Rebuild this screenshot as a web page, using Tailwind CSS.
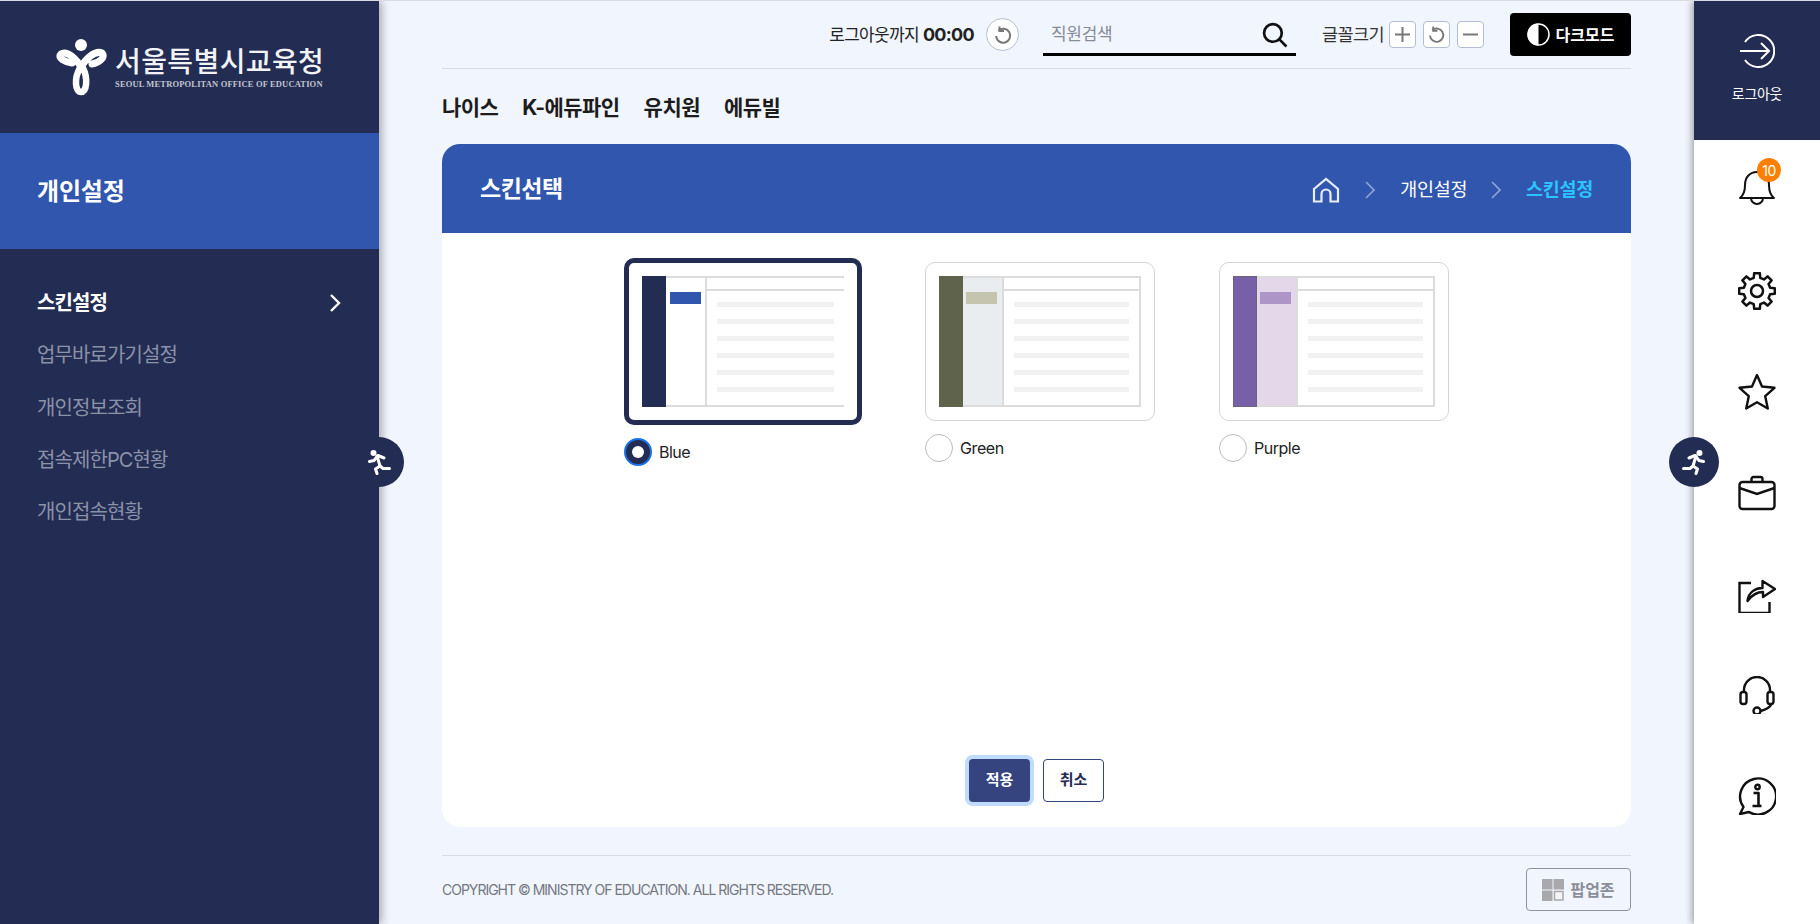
<!DOCTYPE html>
<html lang="ko">
<head>
    <meta charset="UTF-8">
    <title>스킨설정</title>
    <script src="https://cdn.jsdelivr.net/npm/@tailwindcss/browser@4"></script>
</head>
<body class="bg-[#f1f5fd] font-['Inter','Noto_Sans_CJK_KR',sans-serif] text-[#222]">
<div class="relative flex h-[924px] w-[1820px] overflow-hidden border-t border-[#d9dbe0]">

    <!-- left menu -->
    <aside class="z-10 flex w-[379px] flex-none flex-col bg-[#232d53] shadow-[3px_0_8px_rgba(0,0,0,0.3)]">
        <div class="flex h-[132px] flex-none items-start pl-[56px] pt-[37px]">
            <svg width="52" height="58" viewBox="0 0 52 58" fill="none" stroke="#fff" stroke-linecap="round">
                <circle cx="25" cy="7" r="6" fill="#fff" stroke="none"/>
                <path d="M26 31 C21 21 11 12 5 16 C1 20 9 24 16 25" stroke-width="7"/>
                <path d="M24 31 C29 21 39 12 46 15 C50 19 43 25 36 26" stroke-width="7"/>
                <path d="M24 30 C18 40 19 54 25 54 C31 54 32 40 27 30" stroke-width="6.500"/>
            </svg>
            <div class="ml-[7px] mt-[7px] flex flex-col">
                <span class="whitespace-nowrap text-[28px] font-medium leading-[34px] tracking-[0.4px] text-[#f2f3f6]">서울특별시교육청</span>
                <span class="whitespace-nowrap font-['Liberation_Serif',serif] text-[8.5px] font-bold leading-[10px] tracking-[0.15px] text-[#c2c5d0]">SEOUL METROPOLITAN OFFICE OF EDUCATION</span>
            </div>
        </div>
        <div class="flex h-[116px] flex-none items-center bg-[#3156ae] pl-[37px] pt-[2px] text-[24px] font-bold tracking-[-0.2px] text-white">개인설정</div>
        <nav class="flex flex-col pt-[28px] text-[20px] tracking-[-0.9px] text-[#8b91a8]">
            <a class="flex h-[52px] items-center justify-between pl-[37px] pr-[38px] font-bold text-white">
                스킨설정
                <svg width="12" height="20" viewBox="0 0 12 20" fill="none" stroke="#fff" stroke-width="2.4"><path d="M2 2l8 8-8 8"/></svg>
            </a>
            <a class="flex h-[52px] items-center pl-[37px]">업무바로가기설정</a>
            <a class="flex h-[53px] items-center pl-[37px]">개인정보조회</a>
            <a class="flex h-[52px] items-center pl-[37px]">접속제한PC현황</a>
            <a class="flex h-[52px] items-center pl-[37px]">개인접속현황</a>
        </nav>
    </aside>

    <!-- main -->
    <main class="flex min-w-0 flex-1 flex-col px-[63px]">
        <header class="flex h-[68px] flex-none items-center justify-end border-b border-[#d8dce6]">
            <span class="whitespace-nowrap pt-[1px] text-[17px] tracking-[-0.7px] text-[#222]">로그아웃까지 <b class="text-[18px] font-bold">00:00</b></span>
            <button class="ml-[12px] flex h-[33px] w-[33px] items-center justify-center rounded-full border border-[#b5bdd3] bg-white">
                <svg width="20" height="20" viewBox="0 0 20 20" fill="none" stroke="#777" stroke-width="2"><path d="M5.5 5.5A7 7 0 1 1 3.2 11"/><path d="M6.5 1.5v4.5h4.5" stroke-linejoin="miter"/></svg>
            </button>
            <div class="ml-[24px] mt-[15px] flex h-[40px] w-[253px] items-center justify-between self-start border-b-[3px] border-black pl-[8px] pr-[8px]">
                <input class="w-[150px] bg-transparent text-[17px] tracking-[-0.3px] outline-none placeholder:text-[#858b97]" placeholder="직원검색">
                <svg width="26" height="26" viewBox="0 0 25 25" fill="none" stroke="#111" stroke-width="2.6"><circle cx="10.5" cy="10.5" r="8.5"/><path d="M16.5 16.5l7 7"/></svg>
            </div>
            <span class="ml-[26px] whitespace-nowrap pt-[1px] text-[17.5px] tracking-[-0.6px] text-[#333]">글꼴크기</span>
            <div class="ml-[5px] flex gap-[7px]">
                <button class="flex h-[27px] w-[27px] items-center justify-center rounded-[4px] border border-[#b5bdd3] bg-white">
                    <svg width="17" height="17" viewBox="0 0 17 17" stroke="#777" stroke-width="2"><path d="M8.5 1v15M1 8.5h15"/></svg>
                </button>
                <button class="flex h-[27px] w-[27px] items-center justify-center rounded-[4px] border border-[#b5bdd3] bg-white">
                    <svg width="19" height="19" viewBox="0 0 20 20" fill="none" stroke="#777" stroke-width="2"><path d="M5.5 5.5A7 7 0 1 1 3.2 11"/><path d="M6.5 1.5v4.5h4.5"/></svg>
                </button>
                <button class="flex h-[27px] w-[27px] items-center justify-center rounded-[4px] border border-[#b5bdd3] bg-white">
                    <svg width="17" height="17" viewBox="0 0 17 17" stroke="#777" stroke-width="2"><path d="M1 8.5h15"/></svg>
                </button>
            </div>
            <button class="ml-[26px] flex h-[43px] w-[121px] items-center justify-center gap-[6px] rounded-[4px] bg-black text-[16px] font-bold text-white">
                <svg width="23" height="23" viewBox="0 0 23 23"><circle cx="11.5" cy="11.5" r="10.5" fill="none" stroke="#fff" stroke-width="1.5"/><path d="M11.5 0.5a11 11 0 0 0 0 22z" fill="#fff"/></svg>
                다크모드
            </button>
        </header>

        <nav class="flex h-[75px] flex-none items-center gap-[24px] pt-[3px] text-[21px] font-bold tracking-[-0.55px] text-[#1c1c1c]">
            <a>나이스</a><a>K-에듀파인</a><a>유치원</a><a>에듀빌</a>
        </nav>

        <section class="flex h-[683px] flex-none flex-col overflow-hidden rounded-[18px] bg-white">
            <div class="flex h-[89px] flex-none items-center justify-between bg-[#3156ae] pl-[38px] pr-[38px] pt-[2px] text-white">
                <h2 class="text-[23px] font-bold tracking-[-0.5px]">스킨선택</h2>
                <div class="flex items-center text-[18.5px] tracking-[-0.3px]">
                    <svg width="28" height="26" viewBox="0 0 28 26" fill="none" stroke="#e8edf8" stroke-width="2.2"><path d="M2 12L14 2l12 10v12.5H18.5V17a4.5 4.5 0 0 0-9 0v7.500H2z"/></svg>
                    <svg class="ml-[25px]" width="10" height="18" viewBox="0 0 10 18" fill="none" stroke="#8fa5d8" stroke-width="1.6"><path d="M1 1l8 8-8 8"/></svg>
                    <span class="ml-[25px]">개인설정</span>
                    <svg class="ml-[24px]" width="10" height="18" viewBox="0 0 10 18" fill="none" stroke="#8fa5d8" stroke-width="1.6"><path d="M1 1l8 8-8 8"/></svg>
                    <span class="ml-[25px] font-bold text-[#2cc4ff]">스킨설정</span>
                </div>
            </div>

            <div class="flex flex-1 flex-col">
                <div class="flex flex-1 items-start justify-center gap-[63px] pt-[25px]">
                    <!-- blue -->
                    <div class="flex w-[238px] flex-col">
                        <div class="rounded-[10px] border-[5px] border-[#232d53] p-[13px]">
                            <div class="flex h-[131px] w-[202px] border-b-2 border-[#dcdcdc]">
                                <div class="-mb-[2px] w-[24px] bg-[#232d53]"></div>
                                <div class="w-[41px] border-r-2 border-t-2 border-[#dcdcdc] pl-[4px] pt-[14px]"><div class="h-[12px] w-[31px] bg-[#3156ae]"></div></div>
                                <div class="flex-1 border-t-2 border-[#dcdcdc]">
                                    <div class="h-[13px] border-b-2 border-[#dcdcdc]"></div>
                                    <div class="flex flex-col gap-[12px] px-[10px] pt-[11px]">
                                        <div class="h-[5px] bg-[#f1f1f1]"></div><div class="h-[5px] bg-[#f1f1f1]"></div><div class="h-[5px] bg-[#f1f1f1]"></div><div class="h-[5px] bg-[#f1f1f1]"></div><div class="h-[5px] bg-[#f1f1f1]"></div><div class="h-[5px] bg-[#f1f1f1]"></div>
                                    </div>
                                </div>
                            </div>
                        </div>
                        <label class="mt-[13px] flex items-center gap-[7px] text-[16px] tracking-[-0.5px]">
                            <span class="flex h-[28px] w-[28px] items-center justify-center rounded-full border-[2px] border-[#1a73e8] bg-[#232d53]"><span class="h-[12px] w-[12px] rounded-full bg-white"></span></span>
                            Blue
                        </label>
                    </div>
                    <!-- green -->
                    <div class="mt-[4px] flex w-[230px] flex-col">
                        <div class="rounded-[10px] border border-[#d5d5d5] p-[13px]">
                            <div class="flex h-[131px] w-[202px] border-b-2 border-[#dcdcdc]">
                                <div class="-mb-[2px] w-[24px] bg-[#5f634c]"></div>
                                <div class="w-[41px] border-r-2 border-t-2 border-[#dcdcdc] bg-[#e9edf0] pl-[3px] pt-[14px]"><div class="h-[12px] w-[31px] bg-[#c5c4ae]"></div></div>
                                <div class="flex-1 border-r-2 border-t-2 border-[#dcdcdc]">
                                    <div class="h-[13px] border-b-2 border-[#dcdcdc]"></div>
                                    <div class="flex flex-col gap-[12px] px-[10px] pt-[11px]">
                                        <div class="h-[5px] bg-[#f1f1f1]"></div><div class="h-[5px] bg-[#f1f1f1]"></div><div class="h-[5px] bg-[#f1f1f1]"></div><div class="h-[5px] bg-[#f1f1f1]"></div><div class="h-[5px] bg-[#f1f1f1]"></div><div class="h-[5px] bg-[#f1f1f1]"></div>
                                    </div>
                                </div>
                            </div>
                        </div>
                        <label class="mt-[13px] flex items-center gap-[7px] text-[16px] tracking-[-0.4px]">
                            <span class="h-[28px] w-[28px] rounded-full border border-[#bbb] bg-white"></span>
                            Green
                        </label>
                    </div>
                    <!-- purple -->
                    <div class="ml-[1px] mt-[4px] flex w-[230px] flex-col">
                        <div class="rounded-[10px] border border-[#d5d5d5] p-[13px]">
                            <div class="flex h-[131px] w-[202px] border-b-2 border-[#dcdcdc]">
                                <div class="-mb-[2px] w-[24px] border border-[#6b6478] bg-[#7860a8]"></div>
                                <div class="w-[41px] border-r-2 border-t-2 border-[#dcdcdc] bg-[#e3d7e9] pl-[3px] pt-[14px]"><div class="h-[12px] w-[31px] bg-[#ae95c8]"></div></div>
                                <div class="flex-1 border-r-2 border-t-2 border-[#dcdcdc]">
                                    <div class="h-[13px] border-b-2 border-[#dcdcdc]"></div>
                                    <div class="flex flex-col gap-[12px] px-[10px] pt-[11px]">
                                        <div class="h-[5px] bg-[#f1f1f1]"></div><div class="h-[5px] bg-[#f1f1f1]"></div><div class="h-[5px] bg-[#f1f1f1]"></div><div class="h-[5px] bg-[#f1f1f1]"></div><div class="h-[5px] bg-[#f1f1f1]"></div><div class="h-[5px] bg-[#f1f1f1]"></div>
                                    </div>
                                </div>
                            </div>
                        </div>
                        <label class="mt-[13px] flex items-center gap-[7px] text-[16px] tracking-[-0.5px]">
                            <span class="h-[28px] w-[28px] rounded-full border border-[#bbb] bg-white"></span>
                            Purple
                        </label>
                    </div>
                </div>
                <div class="flex justify-center gap-[13px] pb-[25px] text-[15px] font-bold">
                    <button class="h-[43px] w-[61px] rounded-[4px] bg-[#35447f] text-white ring-[4px] ring-[#bfdbfe]">적용</button>
                    <button class="h-[43px] w-[61px] rounded-[4px] border border-[#35447f] bg-white text-[#232d53]">취소</button>
                </div>
            </div>
        </section>

        <footer class="mt-[28px] flex flex-1 items-center justify-between border-t border-[#d8dce6] pb-[1px]">
            <span class="text-[14px] tracking-[-1px] text-[#747883]">COPYRIGHT © MINISTRY OF EDUCATION. ALL RIGHTS RESERVED.</span>
            <button class="flex h-[43px] w-[105px] items-center justify-center gap-[6px] rounded-[4px] border border-[#8f939e] text-[16px] font-bold text-[#8a8e99]">
                <svg width="22" height="22" viewBox="0 0 22 22"><path d="M0 0h10.500v10.500H0zM11.500 0H22v10.500H11.500zM0 11.500h10.500V22H0z" fill="#a8a8ad"/><path d="M12.500 12.500h8.500v8.500h-8.500z" fill="#f4f4f6" stroke="#a8a8ad" stroke-width="1.500"/></svg>
                팝업존
            </button>
        </footer>
    </main>

    <!-- right quick menu -->
    <aside class="z-10 flex w-[126px] flex-none flex-col bg-white shadow-[-2px_0_7px_rgba(0,0,0,0.35)]">
        <a class="flex h-[139px] flex-none flex-col items-center bg-[#232d53] pt-[33px] text-[14px] tracking-[-0.3px] text-white">
            <svg width="36" height="34" viewBox="0 0 36 34" fill="none" stroke="#fff" stroke-width="2"><path d="M6 8a16 16 0 1 1 0 18"/><path d="M1 17h29M22 9l8 8-8 8"/></svg>
            <span class="mt-[15px]">로그아웃</span>
        </a>
        <div class="flex flex-col items-center gap-[63px] pt-[27px]">
            <!-- bell -->
            <div class="relative h-[38px] w-[38px]">
                <svg width="38" height="38" viewBox="0 0 38 38" fill="none" stroke="#111" stroke-width="2"><path d="M2 31c4-3 5-7 5-13 0-8 5-13 12-13s12 5 12 13c0 6 1 10 5 13z" stroke-linejoin="round"/><path d="M13 31a6 6 0 0 0 12 0"/></svg>
                <span class="absolute -right-[5px] -top-[9px] flex h-[24px] w-[24px] items-center justify-center rounded-full bg-[#ff7f00] text-[14px] tracking-[-0.5px] text-white">10</span>
            </div>
            <svg class="mt-[4px]" width="38" height="38" viewBox="0 0 38 38" fill="none" stroke="#111" stroke-width="2.500" stroke-linejoin="round">
                <g transform="translate(19 19)">
                    <polygon points="-3.27,-13.1 -2.8,-17.8 2.8,-17.8 3.27,-13.1 6.95,-11.57 10.6,-14.57 14.57,-10.6 11.57,-6.95 13.1,-3.27 17.8,-2.8 17.8,2.8 13.1,3.27 11.57,6.95 14.57,10.6 10.6,14.57 6.95,11.57 3.27,13.1 2.8,17.8 -2.8,17.8 -3.27,13.1 -6.95,11.57 -10.6,14.57 -14.57,10.6 -11.57,6.95 -13.1,3.27 -17.8,2.8 -17.8,-2.8 -13.1,-3.27 -11.57,-6.95 -14.57,-10.6 -10.6,-14.57 -6.95,-11.57"/>
                    <circle r="6"/>
                </g>
            </svg>
            <svg width="40" height="38" viewBox="0 0 38 38" fill="none" stroke="#111" stroke-width="2.400" stroke-linejoin="round"><path d="M19 2l5 11.500 12.500 1.300-9.300 8.400 2.600 12.300L19 29.200 8.200 35.500l2.600-12.300L1.500 14.800 14 13.500z"/></svg>
            <svg width="38" height="38" viewBox="0 0 38 38" fill="none" stroke="#111" stroke-width="2.400"><rect x="1.500" y="8" width="35" height="27" rx="3"/><path d="M1.500 14L19 20l17.500-6"/><path d="M13.500 8V5a2 2 0 0 1 2-2h7a2 2 0 0 1 2 2v3"/></svg>
            <svg width="38" height="38" viewBox="0 0 38 38" fill="none" stroke="#111" stroke-width="2.400"><path d="M13 8H1.500v30h30V27"/><path d="M9.500 26c1-9 8-13 15-13V6L37 14l-12 8v-5c-7 0-11 3-15.500 9z" stroke-linejoin="round"/></svg>
            <svg width="38" height="38" viewBox="0 0 38 38" fill="none" stroke="#111" stroke-width="2.400"><path d="M6 17v-3a13 13 0 0 1 26 0v3"/><rect x="2.500" y="16" width="6" height="12" rx="2.500"/><rect x="29.500" y="16" width="6" height="12" rx="2.500"/><path d="M33 28c0 3-6 6-10.500 7"/><circle cx="19" cy="35" r="3.500"/></svg>
            <svg width="38" height="38" viewBox="0 0 38 38" fill="none" stroke="#111" stroke-width="2.400" stroke-linejoin="round"><path d="M2 37l3.500-7A18 18 0 1 1 11 35z"/><circle cx="19.500" cy="10" r="2.200"/><path d="M15.500 16h5v11c0 2 1 2 3 2M14.500 29h8" stroke-width="2.600"/></svg>
        </div>
    </aside>

    <!-- panel toggle buttons -->
    <button class="absolute left-[354px] top-[436px] z-20 flex h-[50px] w-[50px] items-center justify-center rounded-full bg-[#232d53]">
        <svg class="-scale-x-100" width="24" height="26" viewBox="0 0 24 26" fill="none" stroke="#fff" stroke-width="3" stroke-linecap="round" stroke-linejoin="round"><circle cx="17.500" cy="4" r="3" fill="#fff" stroke="none"/><path d="M7 9l6-2.500 4 5 4.500 1"/><path d="M14 7l-3 10-3 2.500H1.500"/><path d="M11 17l4.500 3-1.500 4.500"/></svg>
    </button>
    <button class="absolute left-[1669px] top-[436px] z-20 flex h-[50px] w-[50px] items-center justify-center rounded-full bg-[#232d53]">
        <svg width="24" height="26" viewBox="0 0 24 26" fill="none" stroke="#fff" stroke-width="3" stroke-linecap="round" stroke-linejoin="round"><circle cx="17.500" cy="4" r="3" fill="#fff" stroke="none"/><path d="M7 9l6-2.500 4 5 4.500 1"/><path d="M14 7l-3 10-3 2.500H1.500"/><path d="M11 17l4.500 3-1.500 4.500"/></svg>
    </button>
</div>
</body>
</html>
